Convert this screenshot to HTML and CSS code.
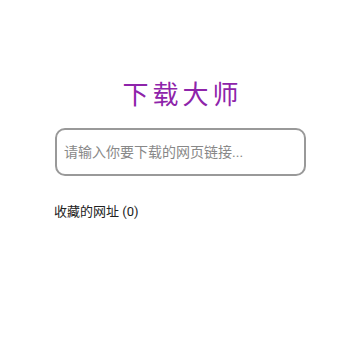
FILE: index.html
```html
<!DOCTYPE html>
<html lang="zh-CN">
<head>
  <meta charset="UTF-8">
  <meta name="viewport" content="width=device-width, initial-scale=1.0">
  <title>下载大师</title>
  <link rel="stylesheet" href="styles.css">
</head>
<body>
  <div class="app">
    <h1 class="title">下载大师</h1>
    <input class="url-input" type="text" placeholder="请输入你要下载的网页链接...">
    <h2 class="fav-title">收藏的网址 (0)</h2>
    <div id="favList"></div>
  </div>
</body>
</html>
```

FILE: styles.css
```css
body {
  margin: 0;
  background-color: #fff;
  font-family: Roboto, "Noto Sans CJK SC", sans-serif;
}
.app {
  padding: 0 54px 0 55px;
}
.title {
  margin: 78px 0 16px;
  padding-left: 4px;
  text-align: center;
  font-size: 26px;
  font-weight: 400;
  letter-spacing: 4px;
  line-height: 34px;
  color: #8e24aa;
}
.url-input {
  display: block;
  box-sizing: border-box;
  width: 100%;
  height: 48px;
  padding: 0 7px;
  border: 2px solid #999;
  border-radius: 10px;
  font-family: inherit;
  font-size: 14px;
  color: #333;
  outline: none;
}
.url-input::placeholder {
  color: #888;
}
.fav-title {
  margin: 26px 0 0 -1px;
  font-size: 13px;
  font-weight: 400;
  line-height: 20px;
  color: #222;
}
```
